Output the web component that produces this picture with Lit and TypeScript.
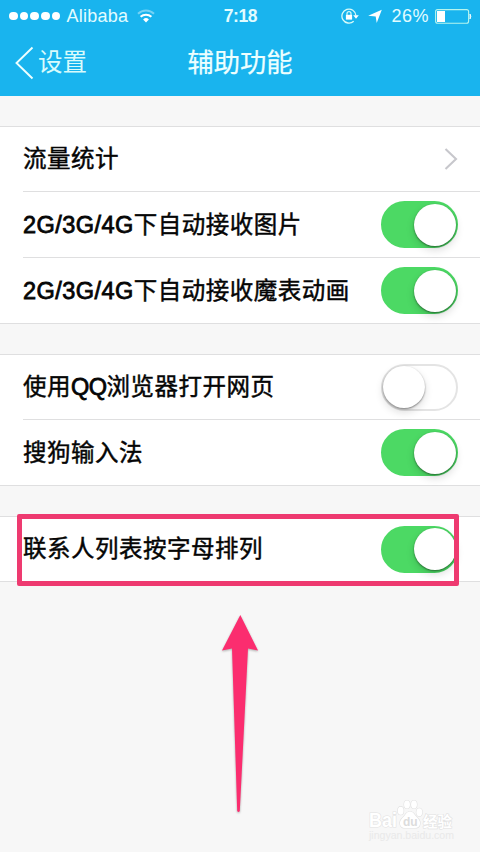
import { LitElement, html, svg, css, nothing } from "lit";
import { customElement, property } from "lit/decorators.js";
import { classMap } from "lit/directives/class-map.js";

@customElement("toggle-switch")
class ToggleSwitch extends LitElement {
  @property({ type: Boolean }) on = false;

  static styles = css`
    :host { display: block; width: 77px; height: 47px; flex: none; }
    .track {
      box-sizing: border-box; display: flex; align-items: center;
      width: 77px; height: 47px; border-radius: 24px;
      background: #fff; border: 2px solid #e4e4e4;
    }
    .track.on { background: #4cd964; border-color: #4cd964; justify-content: flex-end; }
    .knob {
      width: 42px; height: 42px; border-radius: 50%; background: #fff;
      box-shadow: 0 1px 2px rgba(0, 0, 0, .45), 0 4px 9px rgba(0, 0, 0, .14);
    }
  `;

  render() {
    return html`<div class=${classMap({ track: true, on: this.on })}><div class="knob"></div></div>`;
  }
}

@customElement("status-bar")
class StatusBar extends LitElement {
  static styles = css`
    :host {
      display: grid; grid-template-columns: 1fr auto 1fr; align-items: center;
      box-sizing: border-box; height: 31px; padding: 1px 8px 0 9px; color: #e2fcff;
      font: 18px/30px "Liberation Sans", sans-serif;
    }
    .side { display: flex; align-items: center; }
    .right { justify-content: flex-end; }
    .dots { display: flex; gap: 2px; margin-right: 6px; }
    .dot { width: 8.7px; height: 8.7px; border-radius: 50%; background: #fff; }
    .carrier { letter-spacing: .25px; }
    .time { font-weight: bold; font-size: 17.5px; letter-spacing: -.4px; }
    .wifi { margin-left: 9px; }
    .lock { margin-right: 9px; }
    .plane { margin-right: 9px; }
    .percent { margin-right: 6px; letter-spacing: .5px; }
    svg { display: block; flex: none; }
  `;

  render() {
    return html`
      <div class="side">
        <div class="dots">${[0, 1, 2, 3, 4].map(() => html`<span class="dot"></span>`)}</div>
        <span class="carrier">Alibaba</span>
        <svg class="wifi" width="18" height="14" viewBox="0 0 18 14" fill="none" stroke="#fff" stroke-width="2">
          <path d="M1 4.8A11.5 11.5 0 0 1 17 4.8" opacity=".4" />
          <path d="M3.6 7.8A7.8 7.8 0 0 1 14.4 7.8" />
          <path d="M6.1 10.5A4.2 4.2 0 0 1 11.9 10.5L9 13.6Z" fill="#fff" stroke="none" />
        </svg>
      </div>
      <span class="time">7:18</span>
      <div class="side right">
        <svg class="lock" width="18" height="16" viewBox="0 0 18 16" fill="none" stroke="#d9fbf8">
          <path d="M12.7 13.2A7 7 0 1 1 14.9 7.5" stroke-width="1.3" />
          <path d="M12.2 7.3h5.6L15 10.8z" fill="#fff" stroke="none" />
          <rect x="4.9" y="6.8" width="6.2" height="4.8" fill="#fff" stroke="none" />
          <path d="M6 7V5.6a2 2 0 0 1 4 0V7" stroke-width="1.2" />
        </svg>
        <svg class="plane" width="14" height="15" viewBox="0 0 14 15">
          <path d="M13.8.8 8.7 14 7.7 7.6.2 6.8Z" fill="#fff" />
        </svg>
        <span class="percent">26%</span>
        <svg width="37" height="15" viewBox="0 0 37 15">
          <rect x=".6" y=".6" width="33" height="13.6" rx="2" fill="none" stroke="#b5f5ee" stroke-width="1.1" />
          <rect x="2" y="2" width="8" height="11" fill="#fff" />
          <path d="M35 5q1.7 2.4 0 5z" fill="#fff" stroke="#fff" stroke-width=".8" />
        </svg>
      </div>
    `;
  }
}

interface Row { latin?: string; before?: string; text: string; kind: "link" | "on" | "off"; marked?: boolean; }

const groups: Row[][] = [
  [
    { text: "流量统计", kind: "link" },
    { latin: "2G/3G/4G", text: "下自动接收图片", kind: "on" },
    { latin: "2G/3G/4G", text: "下自动接收魔表动画", kind: "on" },
  ],
  [
    { before: "使用", latin: "QQ", text: "浏览器打开网页", kind: "off" },
    { text: "搜狗输入法", kind: "on" },
  ],
  [{ text: "联系人列表按字母排列", kind: "on", marked: true }],
];

@customElement("app-root")
class AppRoot extends LitElement {
  static styles = css`
    :host {
      display: block; position: relative; width: 480px; height: 852px; overflow: hidden;
      background: #f7f7f7; color: #050505;
      font-family: "Liberation Sans", "Noto Sans CJK SC", sans-serif;
    }
    header { height: 96px; background: #19b4ee; color: #edffff; }
    .nav {
      display: grid; grid-template-columns: 1fr auto 1fr; align-items: center;
      height: 64px; padding: 0 15px;
    }
    .back { display: flex; align-items: center; gap: 4px; font-size: 24.5px; line-height: 36px; color: #d8fbfc; }
    .title { font-size: 26.3px; font-weight: 400; line-height: 36px; margin: 0; -webkit-text-stroke: .25px #edffff; }
    svg { display: block; flex: none; }
    .group { margin-top: 30px; background: #fff; border-bottom: 1px solid #dfdfe0; }
    .row { position: relative; box-sizing: border-box; height: 66px; display: flex; padding-left: 23px; }
    .row:first-child { border-top: 1px solid #dfdfe0; }
    .row:last-child { height: 65px; }
    .cell {
      flex: 1; display: flex; align-items: center; justify-content: space-between;
      padding-right: 22px; border-bottom: 1px solid #dfdfe0;
    }
    .row:last-child .cell { border-bottom: none; }
    .label {
      font-size: 23.5px; font-weight: 400; line-height: 36px; letter-spacing: .5px; white-space: nowrap;
      -webkit-text-stroke: .45px #050505;
    }
    .latin { letter-spacing: .45px; -webkit-text-stroke-width: .8px; }
    .latin.tight { letter-spacing: -.5px; }
    .frame {
      position: absolute; left: 17px; top: -3px; width: 442px; height: 72px; box-sizing: border-box;
      border: 5px solid #ee3a70; border-radius: 2px; z-index: 1;
    }
    .arrow { position: absolute; left: 220px; top: 612px; filter: drop-shadow(0 1px 1px rgba(0, 0, 0, .3)); }
    .mark { position: absolute; left: 365px; top: 797px; }
  `;

  private row(r: Row) {
    return html`
      <div class="row">
        <div class="cell">
          <span class="label">${r.before ?? nothing}${r.latin
            ? html`<span class=${classMap({ latin: true, tight: !!r.before })}>${r.latin}</span>`
            : nothing}${r.text}</span>
          ${r.kind === "link"
            ? html`<svg width="14" height="22" viewBox="0 0 14 22" fill="none" stroke="#c7c7cc" stroke-width="2.1">
                <path d="M1.5 1 12 11 1.5 21" />
              </svg>`
            : html`<toggle-switch ?on=${r.kind === "on"}></toggle-switch>`}
        </div>
        ${r.marked ? html`<div class="frame"></div>` : nothing}
      </div>
    `;
  }

  private watermark() {
    const toes = [[35.7, 13.7], [42, 7.5], [49, 7.5], [54.3, 15.3]];
    return html`
      <svg class="mark" width="96" height="46" viewBox="0 0 96 46" fill="#fff" stroke="#e2e2e2" stroke-width="1.2"
        font-family="Liberation Sans, Noto Sans CJK SC, sans-serif" paint-order="stroke">
        <text x="4" y="30" font-size="19.5" font-weight="bold" textLength="28" lengthAdjust="spacingAndGlyphs">Bai</text>
        ${toes.map(([x, y]) => svg`<ellipse cx=${x} cy=${y} rx="2.900" ry="4" />`)}
        <path d="M45 14.500c4 0 4.500 4 8 7 3.500 3.500 2.500 9.500-3 9.500H40c-5.500 0-6.500-6-3-9.500 3.500-3 4-7 8-7z" />
        <text x="38" y="28.500" font-size="12" font-weight="bold" fill="#dcdcdc" stroke="none">du</text>
        <text x="58" y="29.500" font-size="14.500" font-weight="bold">经验</text>
        <text x="4" y="42" font-size="10" fill="#e9e9e9" stroke="none" textLength="85" lengthAdjust="spacingAndGlyphs">jingyan.baidu.com</text>
      </svg>
    `;
  }

  render() {
    return html`
      <header>
        <status-bar></status-bar>
        <div class="nav">
          <div class="back">
            <svg width="19" height="34" viewBox="0 0 19 34" fill="none" stroke="#edffff" stroke-width="1.9">
              <path d="M17.5 1.5 1.5 17 17.5 32.5" />
            </svg>
            <span>设置</span>
          </div>
          <h1 class="title">辅助功能</h1>
        </div>
      </header>
      ${groups.map((g) => html`<section class="group">${g.map((r) => this.row(r))}</section>`)}
      <svg class="arrow" width="40" height="204" viewBox="0 0 40 204">
        <path d="M20.3 3 38 38.5 28 36.5 19.8 199Q18.5 201 17.2 199L12 36.5 2 38.5Z" fill="#fb2d6f" />
      </svg>
      ${this.watermark()}
    `;
  }
}
